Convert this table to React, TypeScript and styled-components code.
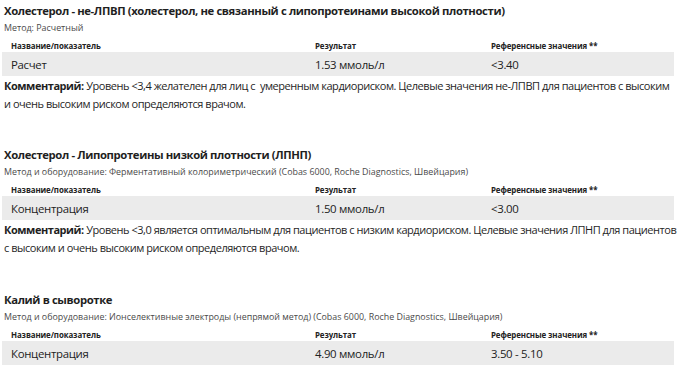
import styled, { createGlobalStyle } from "styled-components";

const GlobalStyle = createGlobalStyle`
  html, body {
    margin: 0;
    padding: 0;
    background: #ffffff;
  }
  body {
    font-family: "Open Sans", "Noto Sans", sans-serif;
    color: #1f1f1f;
  }
`;

const Page = styled.div`
  width: 680px;
  height: 368px;
  overflow: hidden;
  padding: 2px 6px 0 2px;
  box-sizing: border-box;
`;

const Section = styled.section<{ $gap?: number }>`
  margin-bottom: ${(p) => p.$gap ?? 0}px;
`;

const Title = styled.h2`
  margin: 0 0 0 2px;
  height: 17px;
  font-size: 11.3px;
  font-weight: 700;
  line-height: 17px;
  letter-spacing: -0.38px;
  white-space: nowrap;
`;

const Method = styled.div`
  margin: 3px 0 0 2px;
  height: 12px;
  font-size: 8.9px;
  line-height: 12px;
  color: #4a4a4a;
  white-space: nowrap;
`;

const Table = styled.div`
  margin-top: 6px;
`;

const Row = styled.div<{ $head?: boolean }>`
  display: grid;
  grid-template-columns: 304px 176px 1fr;
  align-items: center;
  height: ${(p) => (p.$head ? 12 : 24)}px;
  padding-left: 9px;
  background: ${(p) => (p.$head ? "transparent" : "#ebebeb")};
  font-size: ${(p) => (p.$head ? "7.9px" : "11.4px")};
  font-weight: ${(p) => (p.$head ? 700 : 400)};
  letter-spacing: ${(p) => (p.$head ? "-0.1px" : "-0.3px")};
  color: #222;
  white-space: nowrap;
`;

const Comment = styled.p`
  margin: 1px 0 0 2px;
  font-size: 11px;
  line-height: 18px;
  letter-spacing: -0.46px;
  white-space: pre;
  color: #1f1f1f;

  b {
    font-weight: 700;
  }
`;

type Result = {
  title: string;
  method: string;
  name: string;
  value: string;
  reference: string;
  comment?: [string, string];
  gap?: number;
};

const results: Result[] = [
  {
    title:
      "Холестерол - не-ЛПВП (холестерол, не связанный с липопротеинами высокой плотности)",
    method: "Метод: Расчетный",
    name: "Расчет",
    value: "1.53 ммоль/л",
    reference: "<3.40",
    comment: [
      "Уровень <3,4 желателен для лиц с  умеренным кардиориском. Целевые значения не-ЛПВП для пациентов с высоким",
      "и очень высоким риском определяются врачом.",
    ],
    gap: 33,
  },
  {
    title: "Холестерол - Липопротеины низкой плотности (ЛПНП)",
    method:
      "Метод и оборудование: Ферментативный колориметрический (Cobas 6000, Roche Diagnostics, Швейцария)",
    name: "Концентрация",
    value: "1.50 ммоль/л",
    reference: "<3.00",
    comment: [
      "Уровень <3,0 является оптимальным для пациентов с низким кардиориском. Целевые значения ЛПНП для пациентов",
      "с высоким и очень высоким риском определяются врачом.",
    ],
    gap: 34,
  },
  {
    title: "Калий в сыворотке",
    method:
      "Метод и оборудование: Ионселективные электроды (непрямой метод) (Cobas 6000, Roche Diagnostics, Швейцария)",
    name: "Концентрация",
    value: "4.90 ммоль/л",
    reference: "3.50 - 5.10",
  },
];

export default function App() {
  return (
    <>
      <GlobalStyle />
      <Page>
        {results.map((r) => (
          <Section key={r.title} $gap={r.gap}>
            <Title>{r.title}</Title>
            <Method>{r.method}</Method>
            <Table>
              <Row $head>
                <span>Название/показатель</span>
                <span>Результат</span>
                <span>Референсные значения **</span>
              </Row>
              <Row>
                <span>{r.name}</span>
                <span>{r.value}</span>
                <span>{r.reference}</span>
              </Row>
            </Table>
            {r.comment && (
              <Comment>
                <b>Комментарий:</b> {r.comment[0]}
                <br />
                {r.comment[1]}
              </Comment>
            )}
          </Section>
        ))}
      </Page>
    </>
  );
}
